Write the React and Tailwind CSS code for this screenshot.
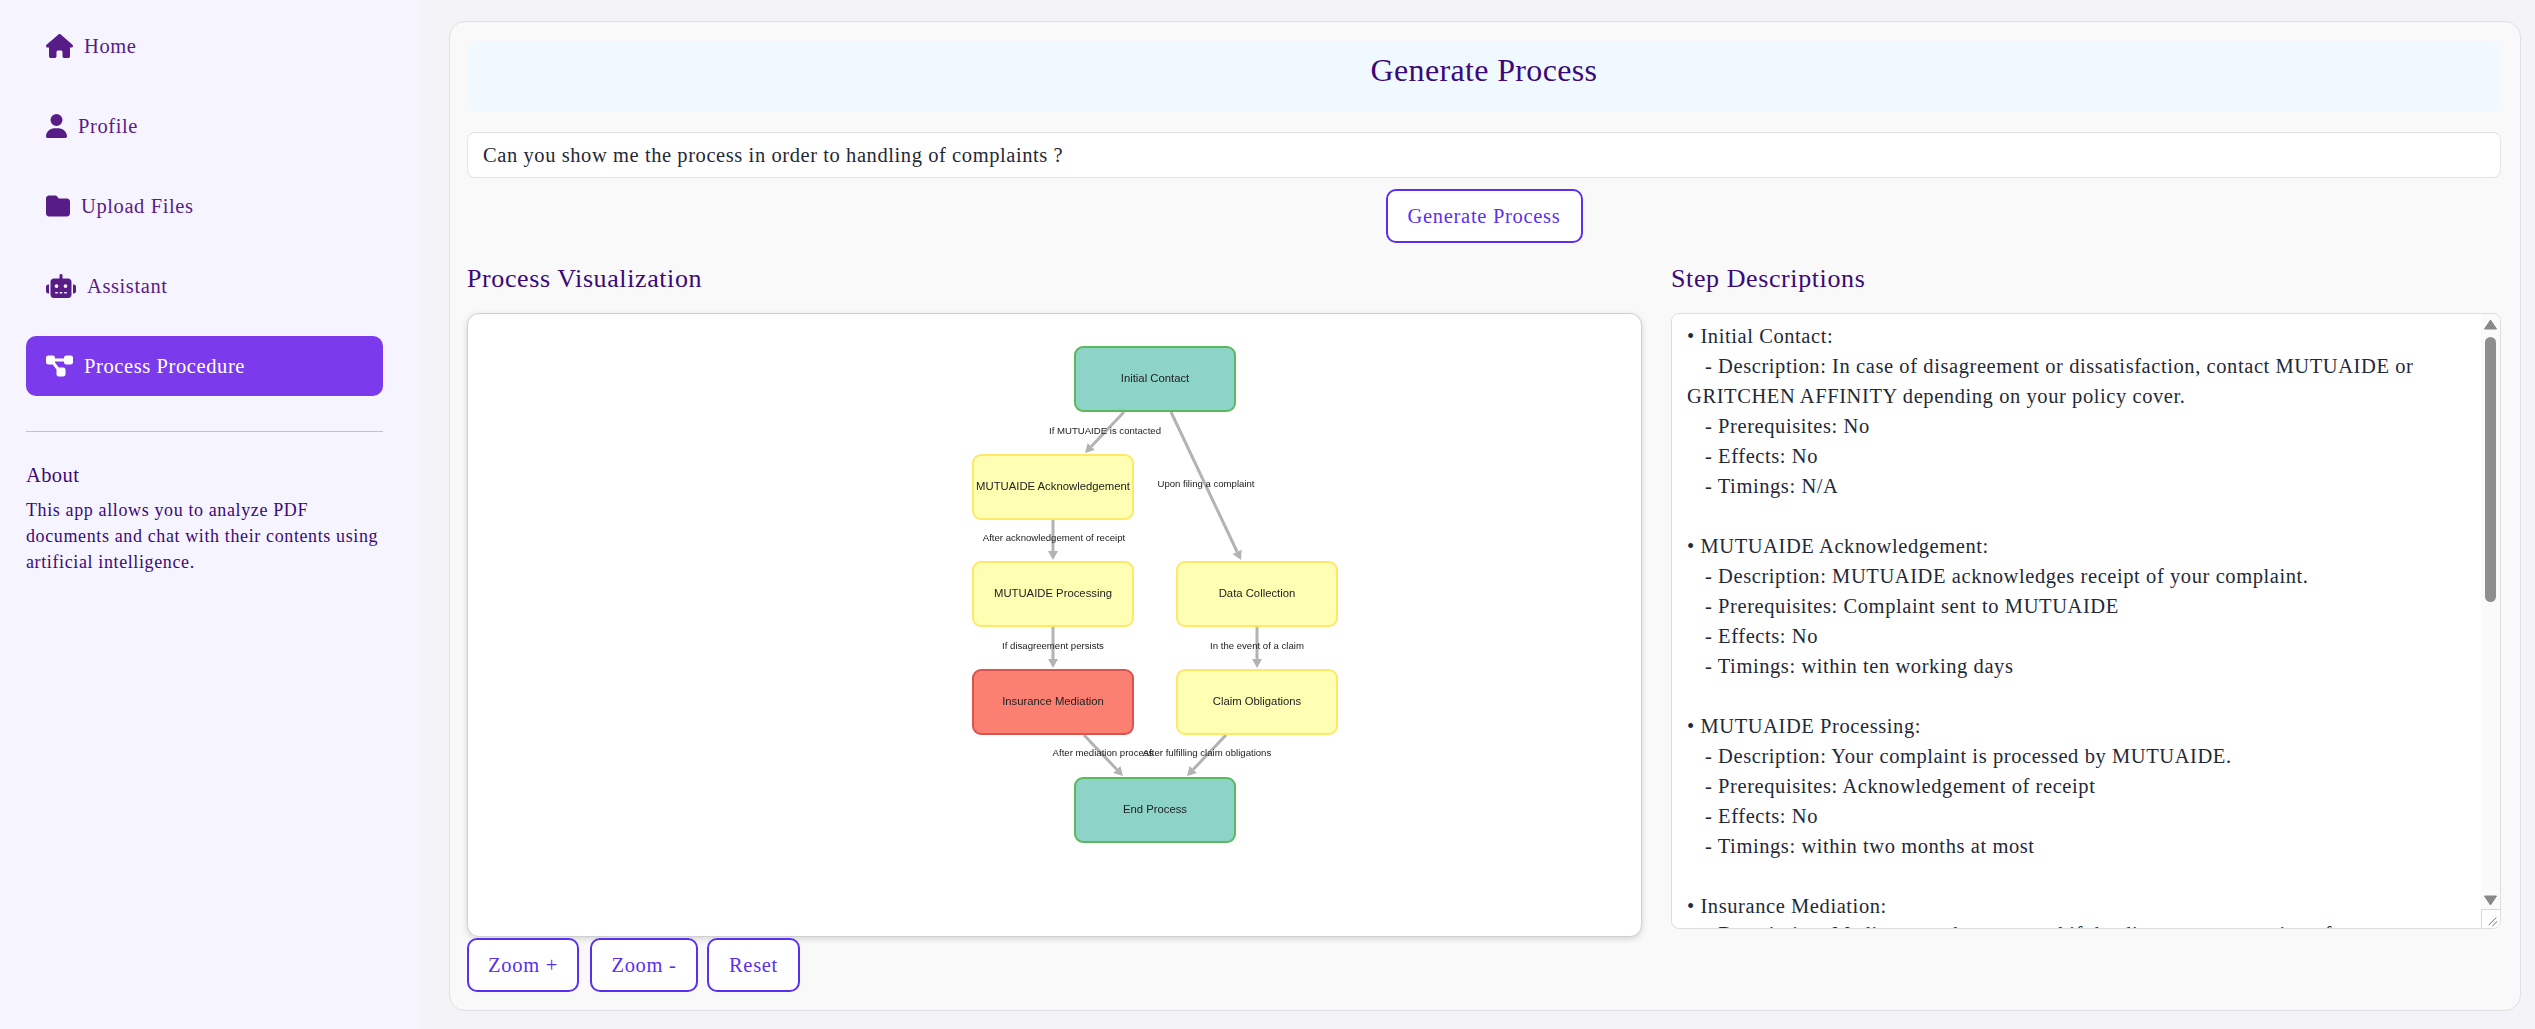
import React from "react";
import { FaHouse, FaUser, FaFolder, FaRobot, FaDiagramProject } from "react-icons/fa6";

const nav = [
  { label: "Home", Icon: FaHouse, w: "w-[27px]" },
  { label: "Profile", Icon: FaUser, w: "w-[21px]" },
  { label: "Upload Files", Icon: FaFolder, w: "w-6" },
  { label: "Assistant", Icon: FaRobot, w: "w-[30px]" },
  { label: "Process Procedure", Icon: FaDiagramProject, w: "w-[27px]", active: true },
];

const nodes = [
  { x: 1075, y: 347, t: "Initial Contact", k: "g" },
  { x: 973, y: 455, t: "MUTUAIDE Acknowledgement", k: "y" },
  { x: 973, y: 562, t: "MUTUAIDE Processing", k: "y" },
  { x: 1177, y: 562, t: "Data Collection", k: "y" },
  { x: 973, y: 670, t: "Insurance Mediation", k: "r" },
  { x: 1177, y: 670, t: "Claim Obligations", k: "y" },
  { x: 1075, y: 778, t: "End Process", k: "g" },
];
const palette = {
  g: ["#8dd3c7", "#5cb85c"],
  y: ["#ffffb3", "#ffe866"],
  r: ["#fb8072", "#d9534f"],
};
const edges = [
  [1124, 412, 1085, 453],
  [1171, 412, 1241, 560],
  [1053, 520, 1053, 560],
  [1053, 627, 1053, 668],
  [1257, 627, 1257, 668],
  [1084, 735, 1123, 776],
  [1226, 735, 1187, 776],
];
const labels = [
  [1105, 430, "If MUTUAIDE is contacted"],
  [1206, 483, "Upon filing a complaint"],
  [1054, 537, "After acknowledgement of receipt"],
  [1053, 645, "If disagreement persists"],
  [1257, 645, "In the event of a claim"],
  [1103, 752, "After mediation process"],
  [1207, 752, "After fulfilling claim obligations"],
];

const steps = [
  ["• Initial Contact:", 0],
  ["- Description: In case of disagreement or dissatisfaction, contact MUTUAIDE or", 1],
  ["GRITCHEN AFFINITY depending on your policy cover.", 0],
  ["- Prerequisites: No", 1],
  ["- Effects: No", 1],
  ["- Timings: N/A", 1],
  ["", 0],
  ["• MUTUAIDE Acknowledgement:", 0],
  ["- Description: MUTUAIDE acknowledges receipt of your complaint.", 1],
  ["- Prerequisites: Complaint sent to MUTUAIDE", 1],
  ["- Effects: No", 1],
  ["- Timings: within ten working days", 1],
  ["", 0],
  ["• MUTUAIDE Processing:", 0],
  ["- Description: Your complaint is processed by MUTUAIDE.", 1],
  ["- Prerequisites: Acknowledgement of receipt", 1],
  ["- Effects: No", 1],
  ["- Timings: within two months at most", 1],
  ["", 0],
  ["• Insurance Mediation:", 0],
  ["- Description: Mediator can be contacted if the disagreement persists after", 1],
];

function Outline({ children, className }) {
  return (
    <button className={"h-[54px] rounded-[10px] border-2 border-[#5b2ff2] bg-white text-[20.5px] tracking-[0.7px] text-[#5b2ff2] " + className}>
      {children}
    </button>
  );
}

function Arrow({ x1, y1, x2, y2 }) {
  const a = Math.atan2(y2 - y1, x2 - x1);
  const l = 9;
  const w = 5;
  const bx = x2 - l * Math.cos(a);
  const by = y2 - l * Math.sin(a);
  const nx = -Math.sin(a) * w;
  const ny = Math.cos(a) * w;
  return (
    <g>
      <line x1={x1} y1={y1} x2={bx} y2={by} stroke="#b3b3b3" strokeWidth="3" />
      <polygon points={`${x2},${y2} ${bx + nx},${by + ny} ${bx - nx},${by - ny}`} fill="#b3b3b3" />
    </g>
  );
}

export default function App() {
  return (
    <div className="flex h-[1029px] w-full overflow-hidden bg-[#f3f3f8] font-['Liberation_Serif',serif]">
      <aside className="w-[418px] shrink-0 bg-[#f6f4ff] pl-[26px] pr-[35px] pt-4">
        <nav className="flex flex-col gap-5">
          {nav.map(({ label, Icon, w, active }) => (
            <div
              key={label}
              className={
                "flex h-[60px] items-center gap-[11px] rounded-[10px] pl-5 text-[20.5px] tracking-[0.6px] " +
                (active ? "bg-[#7c3aed] text-white" : "text-[#581c87]")
              }
            >
              <Icon className={"h-6 " + w} />
              <span>{label}</span>
            </div>
          ))}
        </nav>
        <div className="mt-[35px] h-px bg-[#cdb9e6]" />
        <h3 className="mt-[30px] text-[20.5px] leading-[26px] tracking-[0.4px] text-[#3b0a78]">About</h3>
        <p className="mt-[9px] whitespace-pre text-[18px] leading-[26px] tracking-[0.62px] text-[#3b0a78]">
          {"This app allows you to analyze PDF\ndocuments and chat with their contents using\nartificial intelligence."}
        </p>
      </aside>

      <main className="min-w-0 flex-1 pb-[18px] pl-[31px] pr-[14px] pt-[21px]">
        <section className="flex h-full flex-col rounded-2xl border border-[#e0e0e0] bg-[#f9f9f9] pl-[17px] pr-[19px] pt-[19px]">
          <header className="flex h-[71px] shrink-0 items-center justify-center rounded-xl bg-[#f0f9ff] pb-[13px] text-[32px] tracking-[0.35px] text-[#3b0a78]">
            Generate Process
          </header>
          <div className="mt-5 flex h-[46px] shrink-0 items-center rounded-lg border border-[#e2e2ea] bg-white px-[15px] text-[20.5px] tracking-[0.58px] text-[#1f2937]">
            Can you show me the process in order to handling of complaints ?
          </div>
          <div className="mt-[11px] flex justify-center">
            <Outline className="w-[197px]">Generate Process</Outline>
          </div>
          <div className="mt-[19px] flex gap-[29px]">
            <div className="w-[1175px] shrink-0">
              <h2 className="h-[32px] text-[26px] leading-[34px] tracking-[0.6px] text-[#3b0a78]">Process Visualization</h2>
              <div className="mt-[19px] h-[624px] overflow-hidden rounded-xl border border-[#d0d0d0] bg-white shadow-[0_2px_6px_rgba(0,0,0,0.15)]">
                <svg viewBox="468 314 1173 622" className="h-[622px] w-[1173px] blur-[0.5px]">
                  {edges.map(([x1, y1, x2, y2], i) => (
                    <Arrow key={i} x1={x1} y1={y1} x2={x2} y2={y2} />
                  ))}
                  {nodes.map((n) => (
                    <g key={n.t}>
                      <rect x={n.x} y={n.y} width="160" height="64" rx="8" fill={palette[n.k][0]} stroke={palette[n.k][1]} strokeWidth="2" />
                      <text x={n.x + 80} y={n.y + 31} textAnchor="middle" dominantBaseline="central" fontFamily="Liberation Sans" fontSize="11.3" fill="#222">
                        {n.t}
                      </text>
                    </g>
                  ))}
                  {labels.map(([x, y, t]) => (
                    <text key={t} x={x} y={y} textAnchor="middle" dominantBaseline="central" fontFamily="Liberation Sans" fontSize="9.6" fill="#222">
                      {t}
                    </text>
                  ))}
                </svg>
              </div>
              <div className="mt-px flex">
                <Outline className="w-[112px]">Zoom +</Outline>
                <Outline className="ml-[11px] w-[108px]">Zoom -</Outline>
                <Outline className="ml-[9px] w-[93px]">Reset</Outline>
              </div>
            </div>
            <div className="w-[830px] shrink-0">
              <h2 className="h-[32px] text-[26px] leading-[34px] tracking-[0.6px] text-[#3b0a78]">Step Descriptions</h2>
              <div className="relative mt-[19px] h-[616px] overflow-hidden rounded-lg border border-[#dedede] bg-white pl-[15px] pt-[7px] text-[20.5px] leading-[30px] tracking-[0.58px] text-[#1f2937]">
                <div>
                  {steps.map(([t, indent], i) => (
                    <div key={i} className={"h-[30px] whitespace-pre last:-mt-[2px] " + (indent ? "pl-[18px]" : "")}>
                      {t}
                    </div>
                  ))}
                </div>
                <div className="absolute inset-y-0 right-0 w-[19px] bg-[#fafafa]">
                  <svg viewBox="0 0 19 12" className="absolute left-0 top-[5px] h-3 w-[19px]">
                    <path d="M9.5 1 L15.5 10 H3.5 Z" fill="#888" stroke="#888" strokeLinejoin="round" />
                  </svg>
                  <div className="absolute left-[4px] top-[23px] h-[265px] w-[11px] rounded-md bg-[#8e8e8e]" />
                  <svg viewBox="0 0 19 12" className="absolute bottom-[22px] left-0 h-3 w-[19px]">
                    <path d="M9.5 11 L15.5 2 H3.5 Z" fill="#888" stroke="#888" strokeLinejoin="round" />
                  </svg>
                  <div className="absolute bottom-0 right-0 h-[19px] w-[19px] border-l border-t border-[#d8d8d8] bg-white">
                    <svg viewBox="0 0 19 19" className="h-full w-full">
                      <path d="M7 16 L15 8 M11 17 L16 12" stroke="#666" strokeWidth="1" fill="none" />
                    </svg>
                  </div>
                </div>
              </div>
            </div>
          </div>
        </section>
      </main>
    </div>
  );
}
